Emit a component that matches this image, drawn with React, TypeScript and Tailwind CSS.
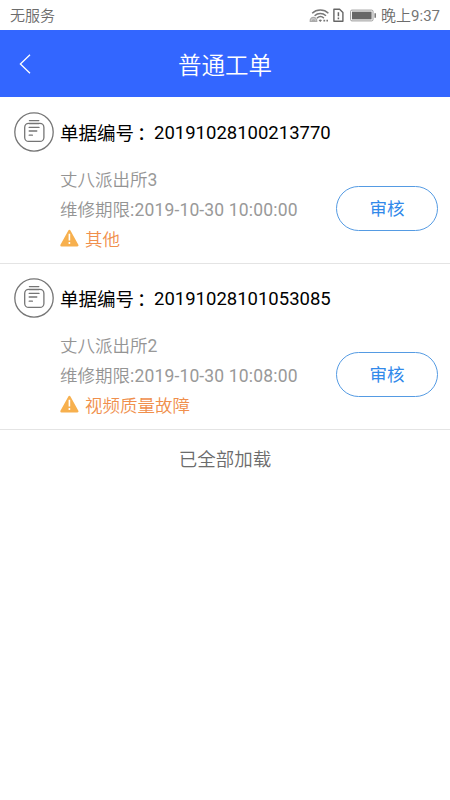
type WorkOrder = {
  id: string;
  station: string;
  stationNo: number;
  deadline: string;
  fault: string;
};

const orders: WorkOrder[] = [
  {
    id: "20191028100213770",
    station: "丈八派出所",
    stationNo: 3,
    deadline: "2019-10-30 10:00:00",
    fault: "其他",
  },
  {
    id: "20191028101053085",
    station: "丈八派出所",
    stationNo: 2,
    deadline: "2019-10-30 10:08:00",
    fault: "视频质量故障",
  },
];

function StatusIcons() {
  return (
    <svg width="68" height="16" viewBox="0 0 68 16" fill="none" aria-hidden>
      <g stroke="#777" strokeWidth="1.5">
        <path d="M3.2 5.2C7.6 1 15 1 19.4 5.2" />
        <path d="M5.6 7.7c3.3-3 8.1-3 11.4 0" />
        <path d="M8 10.1c2.1-1.8 4.9-1.8 6.9 0" />
      </g>
      <path d="M9.6 12.2c1.1-1 2.4-1 3.4 0l-1.7 1.7zM14.4 11.8h1.8v1.8h-1.8zM17.4 11.8h1.6v1.8h-1.6z" fill="#777" />
      <path d="M1.2 13.3c-.6-5 7-5.4 6.6 0zM3.4 13.3c0-2 2.4-2 2.4 0" fill="#ccc" stroke="#aaa" strokeWidth="1.2" />
      <path d="M24.9 1.2h5.7l3.3 3.2v8.8h-9z" stroke="#666" strokeWidth="1.4" strokeLinejoin="round" />
      <path d="M29.4 4.2v4.1M29.4 9.6v1.6" stroke="#666" strokeWidth="1.5" />
      <rect x="41.6" y="2.1" width="22.4" height="10.8" rx="1.3" stroke="#999" strokeWidth="1" />
      <rect x="43" y="3.6" width="19.6" height="7.8" fill="#666" />
      <path d="M66.2 5.2v4.6" stroke="#777" strokeWidth="1.5" />
    </svg>
  );
}

function OrderIcon() {
  return (
    <svg
      className="shrink-0"
      width="40"
      height="40"
      viewBox="0 0 40 40"
      fill="none"
      stroke="#757575"
      strokeWidth="1.3"
      strokeLinecap="round"
      aria-hidden
    >
      <circle cx="20" cy="20" r="19.2" />
      <path d="M15.4 8.6h9.4" />
      <rect x="10.7" y="11.4" width="19.2" height="18" rx="4" />
      <path d="M15.2 11.6h9.8M15.2 15.4h9.8M15.2 19h7.6M15.2 23.2h3.2" />
    </svg>
  );
}

function WarningIcon() {
  return (
    <svg className="-mt-1 shrink-0" width="19" height="18" viewBox="0 0 19 18" aria-hidden>
      <path
        d="M9.4 2 17.3 16.3H1.5z"
        fill="#f7b04e"
        stroke="#f7b04e"
        strokeWidth="2.4"
        strokeLinejoin="round"
      />
      <path d="M9.4 4.8v6.6M9.4 13v2" stroke="#fff" strokeWidth="1.6" />
    </svg>
  );
}

function OrderRow({ order }: { order: WorkOrder }) {
  return (
    <li className="h-[166px] border-b border-[#e4e4e4] pt-[14px] pr-3 pl-[14px]">
      <div className="flex h-10 items-center gap-1.5">
        <OrderIcon />
        <h2 className="flex pt-1 text-[18.5px] whitespace-nowrap text-black">
          <span className="w-[94px] pt-px">
            单据编号<span className="pl-[3px]">：</span>
          </span>
          <span>{order.id}</span>
        </h2>
      </div>
      <div className="mt-3 flex items-center justify-between pl-[46px]">
        <div className="pt-px text-[17.5px] leading-[30px] font-[350] whitespace-nowrap text-[#949494]">
          <p>
            {order.station}
            <span className="font-normal text-[#999]">{order.stationNo}</span>
          </p>
          <p>
            维修期限<span className="font-normal tracking-[0.16px] text-[#999]">:{order.deadline}</span>
          </p>
          <p className="flex items-center gap-1.5 text-[#f08f4c]">
            <WarningIcon />
            {order.fault}
          </p>
        </div>
        <button
          type="button"
          className="-mt-[3px] h-[45px] w-[102px] rounded-full border border-[#559be3] pt-[3px] text-[17.5px] text-[#3189ea]"
        >
          审核
        </button>
      </div>
    </li>
  );
}

export default function App() {
  return (
    <div className="flex h-[800px] w-[450px] flex-col overflow-hidden bg-white font-[Roboto,'Noto_Sans_CJK_SC',sans-serif]">
      <div className="flex h-[30px] shrink-0 items-center justify-between px-2.5 pt-0.5 text-[15px] text-[#757575]">
        <span className="font-[350] text-[#6c6c6c]">无服务</span>
        <div className="flex items-center gap-1">
          <StatusIcons />
          <span>
            <span className="font-[350] text-[#6c6c6c]">晚上</span>9:37
          </span>
        </div>
      </div>

      <header className="grid h-[67px] shrink-0 grid-cols-[1fr_auto_1fr] items-center bg-[#3366ff] text-white">
        <button type="button" className="pl-[19px]" aria-label="返回">
          <svg width="13" height="22" viewBox="0 0 13 22" fill="none" stroke="currentColor" strokeWidth="1.3">
            <path d="M11 1.8 1.4 11 11 20.2" />
          </svg>
        </button>
        <h1 className="pt-1.5 text-[23.5px] font-[350]">普通工单</h1>
      </header>

      <ul className="pt-px">
        {orders.map((order) => (
          <OrderRow key={order.id} order={order} />
        ))}
      </ul>

      <p className="mt-[17px] text-center text-[18.5px] font-[350] text-[#6c6c6c]">已全部加载</p>
    </div>
  );
}
